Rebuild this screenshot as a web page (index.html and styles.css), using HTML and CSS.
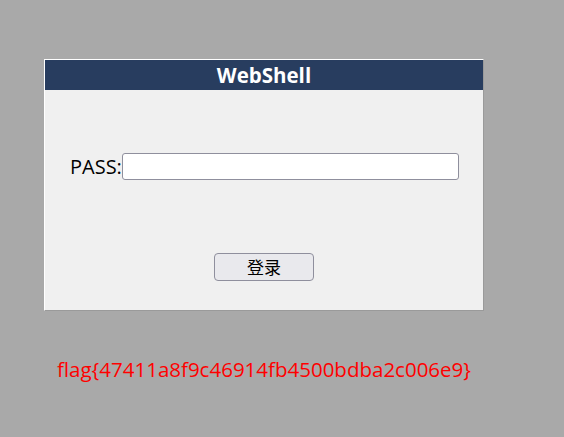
FILE: index.html
```html
<!DOCTYPE html>
<html>
<head>
<meta charset="utf-8">
<title>WebShell</title>
<link rel="stylesheet" href="styles.css">
</head>
<body>
<div class="panel">
  <div class="header">WebShell</div>
  <form class="content">
    <div class="row">
      <label class="label" for="pass">PASS:</label><input class="input" id="pass" type="password">
    </div>
    <div class="actions">
      <button class="btn" type="button">登录</button>
    </div>
  </form>
</div>
<div class="flag">flag{47411a8f9c46914fb4500bdba2c006e9}</div>
</body>
</html>
```
FILE: styles.css
```css
html, body {
  margin: 0;
  padding: 0;
  background: #a9a9a9;
}
body {
  padding: 59px 0 0 44px;
  font-family: "Open Sans", "Noto Sans CJK SC", sans-serif;
}
.panel {
  width: 438px;
  border-top: 1px solid #ffffff;
  border-left: 1px solid #ffffff;
  border-right: 1px solid #9a9a9a;
  border-bottom: 1px solid #9a9a9a;
  background: #f0f0f0;
}
.header {
  height: 30px;
  line-height: 30px;
  background: #283d5f;
  color: #ffffff;
  text-align: center;
  font-weight: bold;
  font-size: 20.5px;
}
.content {
  margin: 0;
  height: 220px;
  box-sizing: border-box;
  padding-top: 63px;
}
.row {
  display: flex;
  align-items: center;
  padding-left: 25px;
  height: 27px;
}
.label {
  font-size: 20px;
  color: #000;
}
.input {
  box-sizing: border-box;
  width: 337px;
  height: 27px;
  margin: 0;
  border: 1px solid #8f8f9d;
  border-radius: 3px;
  background: #fff;
  outline: none;
}
.actions {
  display: flex;
  padding-left: 169px;
  margin-top: 73px;
}
.btn {
  box-sizing: border-box;
  width: 100px;
  height: 28px;
  margin: 0;
  border: 1px solid #8f8f9d;
  border-radius: 4px;
  background: #e9e9ed;
  font-family: "Noto Sans CJK SC", sans-serif;
  font-size: 17px;
  line-height: 26px;
  color: #000;
  padding: 0;
}
.flag {
  margin-top: 44px;
  margin-left: 13px;
  color: #ff0000;
  font-size: 20.5px;
}
```
